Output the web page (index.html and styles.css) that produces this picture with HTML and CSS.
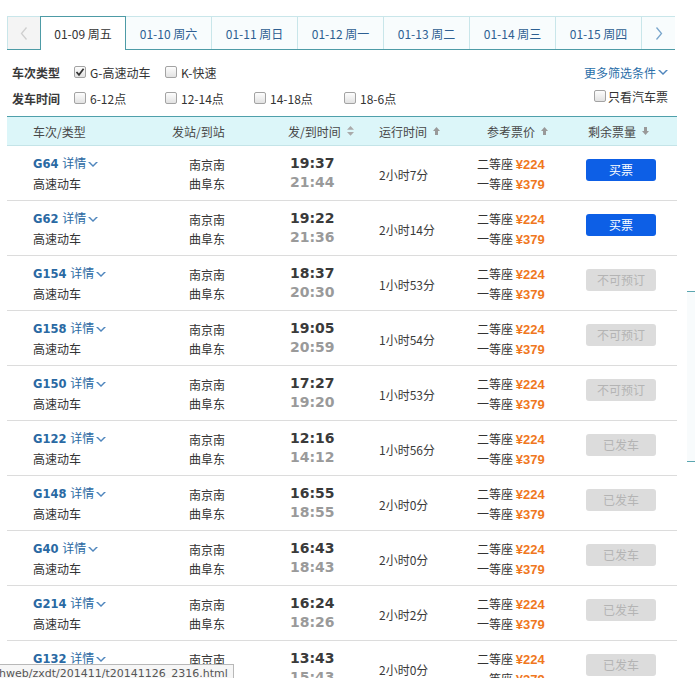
FILE: index.html
```html
<!DOCTYPE html>
<html lang="zh-CN">
<head>
<meta charset="utf-8">
<title>车次列表</title>
<link rel="stylesheet" href="styles.css">
</head>
<body>
<div class="page">
  <div class="main">
    <div class="tabs">
      <div class="tab nav prev"><svg width="8" height="13" viewBox="0 0 8 13"><polyline points="6.5,0.5 1.5,6.5 6.5,12.5" fill="none" stroke="#cfcfcf" stroke-width="1.3"/></svg></div>
      <div class="tab active">01-09 周五</div>
      <div class="tab">01-10 周六</div>
      <div class="tab">01-11 周日</div>
      <div class="tab">01-12 周一</div>
      <div class="tab">01-13 周二</div>
      <div class="tab">01-14 周三</div>
      <div class="tab">01-15 周四</div>
      <div class="tab nav next"><svg width="8" height="13" viewBox="0 0 8 13"><polyline points="1.5,0.5 6.5,6.5 1.5,12.5" fill="none" stroke="#7aa6cc" stroke-width="1.3"/></svg></div>
    </div>

    <div class="filters">
      <div class="frow">
        <span class="flabel">车次类型</span>
        <span class="opt w91"><span class="cb"><svg width="10" height="10" viewBox="0 0 10 10"><polyline points="1.5,5 4,7.8 8.6,1.8" fill="none" stroke="#333" stroke-width="1.7"/></svg></span>G-高速动车</span>
        <span class="opt"><span class="cb"></span>K-快速</span>
        <span class="spacer"></span>
        <span class="more">更多筛选条件<svg class="chev" width="10" height="7" viewBox="0 0 10 7"><polygon points="0,1 2,1 5,4 8,1 10,1 5,6" fill="#4f86bd"/></svg></span>
      </div>
      <div class="frow">
        <span class="flabel">发车时间</span>
        <span class="opt w91"><span class="cb"></span>6-12点</span>
        <span class="opt w89"><span class="cb"></span>12-14点</span>
        <span class="opt w90"><span class="cb"></span>14-18点</span>
        <span class="opt"><span class="cb"></span>18-6点</span>
        <span class="spacer"></span>
        <span class="opt bus"><span class="cb"></span>只看汽车票</span>
      </div>
    </div>

    <div class="thead grid">
      <div class="h1">车次/类型</div>
      <div class="h2">发站/到站</div>
      <div class="h3">发/到时间<svg class="sort" width="7" height="10" viewBox="0 0 7 10"><path d="M3.5 0 L7 3.8 H0 Z M0 6 H7 L3.5 9.8 Z" fill="#aaa"/></svg></div>
      <div class="h4">运行时间<svg class="sort" width="7" height="8" viewBox="0 0 7 8"><path d="M3.5 0 L7 4 H5 V8 H2 V4 H0 Z" fill="#999"/></svg></div>
      <div class="h5">参考票价<svg class="sort" width="7" height="8" viewBox="0 0 7 8"><path d="M3.5 0 L7 4 H5 V8 H2 V4 H0 Z" fill="#999"/></svg></div>
      <div class="h6">剩余票量<svg class="sort" width="7" height="8" viewBox="0 0 7 8"><path d="M2 0 H5 V4 H7 L3.5 8 L0 4 H2 Z" fill="#999"/></svg></div>
    </div>

    <div id="rows"></div>
  </div>
  <div class="side"><div class="side-box"></div></div>
</div>
<div class="status">hweb/zxdt/201411/t20141126_2316.html</div>
<script src="app.js"></script>
</body>
</html>
```

FILE: app.js
```js
var data = [
  ["G64", "19:37", "21:44", "2小时7分", "buy"],
  ["G62", "19:22", "21:36", "2小时14分", "buy"],
  ["G154", "18:37", "20:30", "1小时53分", "no"],
  ["G158", "19:05", "20:59", "1小时54分", "no"],
  ["G150", "17:27", "19:20", "1小时53分", "no"],
  ["G122", "12:16", "14:12", "1小时56分", "gone"],
  ["G148", "16:55", "18:55", "2小时0分", "gone"],
  ["G40", "16:43", "18:43", "2小时0分", "gone"],
  ["G214", "16:24", "18:26", "2小时2分", "gone"],
  ["G132", "13:43", "15:43", "2小时0分", "gone"]
];
var chev = '<svg class="chev" width="10" height="7" viewBox="0 0 10 7"><polygon points="0,1 2,1 5,4 8,1 10,1 5,6" fill="#4f86bd"/></svg>';
var labels = { buy: "买票", no: "不可预订", gone: "已发车" };
var html = "";
data.forEach(function (d) {
  html += '<div class="row grid">' +
    '<div class="c1"><div><span class="tno">' + d[0] + '</span> <span class="detail">详情</span>' + chev + '</div><div>高速动车</div></div>' +
    '<div class="c2"><div>南京南</div><div>曲阜东</div></div>' +
    '<div class="c3"><div class="dep">' + d[1] + '</div><div class="arr">' + d[2] + '</div></div>' +
    '<div class="c4">' + d[3] + '</div>' +
    '<div class="c5"><div>二等座 <span class="price">¥224</span></div><div>一等座 <span class="price">¥379</span></div></div>' +
    '<div class="c6"><span class="btn ' + d[4] + '">' + labels[d[4]] + '</span></div>' +
    '</div>';
});
document.getElementById("rows").innerHTML = html;
```

FILE: styles.css
```css
html, body {
  margin: 0;
  padding: 0;
  background: #fff;
  overflow: hidden;
}
body {
  font-family: "Noto Sans CJK SC", "Noto Sans", sans-serif;
  font-size: 12px;
  color: #333;
}
.page {
  display: flex;
  align-items: flex-start;
}
.main {
  width: 670px;
  margin-left: 7px;
  margin-top: 16px;
}

/* tabs */
.tabs {
  display: flex;
  width: 668px;
  height: 34px;
  border-bottom: 1px solid #4d9ba6;
  box-sizing: border-box;
}
.tab {
  width: 86px;
  height: 33px;
  box-sizing: border-box;
  border-top: 1px solid #c9e6ea;
  border-right: 1px solid #c9e6ea;
  background: #f8fcfd;
  color: #2d5f92;
  display: flex;
  align-items: center;
  justify-content: center;
  font-size: 12px;
}
.tab.nav {
  width: 33px;
}
.tab.prev {
  background: #f4f4f4;
  border-left: 1px solid #c9e6ea;
  border-right: none;
}
.tab.next {
  border-right: none;
}
.tab.active {
  height: 34px;
  background: #fff;
  color: #333;
  border: 1px solid #4d9ba6;
  border-bottom: none;
  margin-bottom: -1px;
}

/* filters */
.filters {
  padding: 9px 9px 5px 5px;
}
.frow {
  display: flex;
  align-items: center;
  height: 26px;
}
.flabel {
  width: 62px;
  font-weight: bold;
  color: #3a3a3a;
}
.opt {
  display: flex;
  align-items: center;
  gap: 4px;
  color: #333;
}
.opt.w91 { width: 91px; }
.opt.w89 { width: 89px; }
.opt.w90 { width: 90px; }
.opt.bus {
  gap: 2px;
  margin-top: -4px;
}
.cb {
  width: 12px;
  height: 12px;
  box-sizing: border-box;
  border: 1px solid #a3a3a3;
  border-radius: 2px;
  background: linear-gradient(#fdfdfd, #e2e2e2);
  display: flex;
  align-items: center;
  justify-content: center;
}
.spacer {
  flex: 1;
}
.more {
  color: #2a6ea8;
  display: flex;
  align-items: center;
  gap: 2px;
}
.chev {
  display: inline-block;
  vertical-align: middle;
}

/* grid */
.grid {
  display: grid;
  grid-template-columns: 153px 120px 90px 95px 110px 102px;
}
.thead {
  height: 30px;
  box-sizing: border-box;
  border-top: 1px solid #4fa0ab;
  border-bottom: 1px solid #c4e4e8;
  background: #dcf6f9;
  align-items: center;
  color: #484848;
}
.thead > div {
  display: flex;
  align-items: center;
  gap: 6px;
}
.h1 { padding-left: 26px; }
.h2 { padding-left: 12px; }
.h3 { padding-left: 8px; gap: 7px; }
.h4 { padding-left: 9px; }
.h5 { padding-left: 22px; }
.h6 { padding-left: 13px; }

.row {
  height: 55px;
  box-sizing: border-box;
  border-bottom: 1px solid #dcdcdc;
  align-items: start;
  line-height: 20px;
}
.c1 {
  padding-left: 26px;
  padding-top: 7px;
}
.tno {
  font-family: "DejaVu Sans", sans-serif;
  font-weight: bold;
  font-size: 11.5px;
  color: #2a69a3;
}
.detail {
  color: #2a69a3;
  margin-left: 1px;
}
.c1 .chev {
  margin-left: 2px;
  margin-top: -1px;
}
.c2 {
  padding-left: 29px;
  padding-top: 9px;
  line-height: 19px;
}
.c3 {
  padding-left: 10px;
  padding-top: 8px;
  font-family: "DejaVu Sans", sans-serif;
  font-weight: bold;
  font-size: 14px;
  line-height: 19px;
}
.dep { color: #3a3a3a; }
.arr { color: #9a9a9a; }
.c4 {
  padding-left: 9px;
  padding-top: 19px;
  color: #3a3a3a;
}
.c5 {
  padding-left: 12px;
  padding-top: 8px;
  line-height: 19px;
}
.price {
  font-family: "Liberation Sans", sans-serif;
  font-weight: bold;
  font-size: 13px;
  color: #f0781e;
}
.c6 {
  padding-left: 11px;
  padding-top: 13px;
}
.btn {
  display: flex;
  align-items: center;
  justify-content: center;
  width: 70px;
  height: 22px;
  border-radius: 3px;
  font-size: 12px;
}
.btn.buy {
  background: #0d5fe6;
  color: #fff;
}
.btn.no, .btn.gone {
  background: #dcdcdc;
  color: #b4b4b4;
}

/* right decoration */
.side {
  width: 8px;
  margin-left: 10px;
}
.side-box {
  margin-top: 291px;
  height: 169px;
  border-top: 1px solid #5aa6b0;
  border-bottom: 1px solid #5aa6b0;
  background: #f8fbfc;
}

/* browser status bubble */
.status {
  position: fixed;
  left: 0;
  bottom: -6px;
  width: 234px;
  height: 20px;
  box-sizing: border-box;
  padding-left: 0;
  background: #f6f6f6;
  border-top: 1px solid #b8b8b8;
  border-right: 1px solid #b8b8b8;
  font-family: "DejaVu Sans", sans-serif;
  font-size: 11px;
  line-height: 18px;
  color: #555;
  white-space: nowrap;
  overflow: hidden;
  text-indent: -1px;
}
```
